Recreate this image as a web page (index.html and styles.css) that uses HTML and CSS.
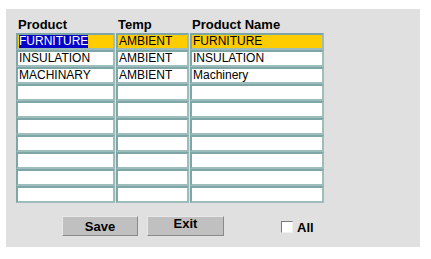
FILE: index.html
```html
<!DOCTYPE html>
<html lang="en">
<head>
    <meta charset="UTF-8">
    <title>Product Temp</title>
    <link rel="stylesheet" href="styles.css">
</head>
<body>
    <div class="panel">
        <div class="grid">
            <div class="head">Product</div>
            <div class="head">Temp</div>
            <div class="head">Product Name</div>

            <div class="cell current"><span class="selected">FURNITURE</span></div>
            <div class="cell current">AMBIENT</div>
            <div class="cell current">FURNITURE</div>

            <div class="cell">INSULATION</div>
            <div class="cell">AMBIENT</div>
            <div class="cell">INSULATION</div>

            <div class="cell">MACHINARY</div>
            <div class="cell">AMBIENT</div>
            <div class="cell">Machinery</div>

            <div class="cell"></div><div class="cell"></div><div class="cell"></div>
            <div class="cell"></div><div class="cell"></div><div class="cell"></div>
            <div class="cell"></div><div class="cell"></div><div class="cell"></div>
            <div class="cell"></div><div class="cell"></div><div class="cell"></div>
            <div class="cell"></div><div class="cell"></div><div class="cell"></div>
            <div class="cell"></div><div class="cell"></div><div class="cell"></div>
            <div class="cell"></div><div class="cell"></div><div class="cell"></div>
        </div>

        <div class="actions">
            <button class="btn save-btn">Save</button>
            <button class="btn exit-btn">Exit</button>
            <label class="all"><span class="box"></span> All</label>
        </div>
    </div>
</body>
</html>
```

FILE: styles.css
```css
body {
    margin: 0;
    padding: 0;
    background: #FFFFFF;
    font-family: 'Liberation Sans', Arial, sans-serif;
    color: #000000;
}

.panel {
    margin: 9px 0 0 6px;
    width: 414px;
    height: 238px;
    background: #e0e0e0;
    padding: 7px 0 0 10px;
    box-sizing: border-box;
}

.grid {
    display: grid;
    grid-template-columns: 99px 73px 134px;
    grid-auto-rows: 17px;
    column-gap: 1px;
}

.head {
    font-size: 13px;
    font-weight: bold;
    line-height: 15px;
    padding: 1px 0 0 2px;
    align-self: start;
}

.cell {
    background: #FFFFFF;
    border: 2px solid #7ea6a6;
    border-right-color: #9dbcbc;
    border-bottom-color: #9dbcbc;
    font-size: 12px;
    line-height: 13px;
    padding-left: 1px;
    box-sizing: border-box;
    white-space: nowrap;
    overflow: hidden;
}

.cell.current {
    background: #ffcc00;
}

.selected {
    background: #0000c8;
    color: #FFFFFF;
}

.actions {
    display: flex;
    align-items: center;
    margin-top: 13px;
    padding-left: 46px;
}

.btn {
    width: 76px;
    height: 20px;
    padding: 0;
    background: #c0c0c0;
    border: 1px solid;
    border-color: #e8e8e8 #8a8a8a #8a8a8a #e8e8e8;
    font-family: 'Liberation Sans', Arial, sans-serif;
    font-size: 13px;
    font-weight: bold;
    color: #000000;
}

.exit-btn {
    margin-left: 9px;
    width: 77px;
    line-height: 12px;
    padding-bottom: 5px;
}

.all {
    display: flex;
    align-items: center;
    gap: 4px;
    margin-left: 57px;
    margin-top: 2px;
    font-size: 13px;
    font-weight: bold;
}

.box {
    width: 10px;
    height: 10px;
    background: #FFFFFF;
    border: 1px solid;
    border-color: #7a7a7a #f0f0f0 #f0f0f0 #7a7a7a;
}
```
